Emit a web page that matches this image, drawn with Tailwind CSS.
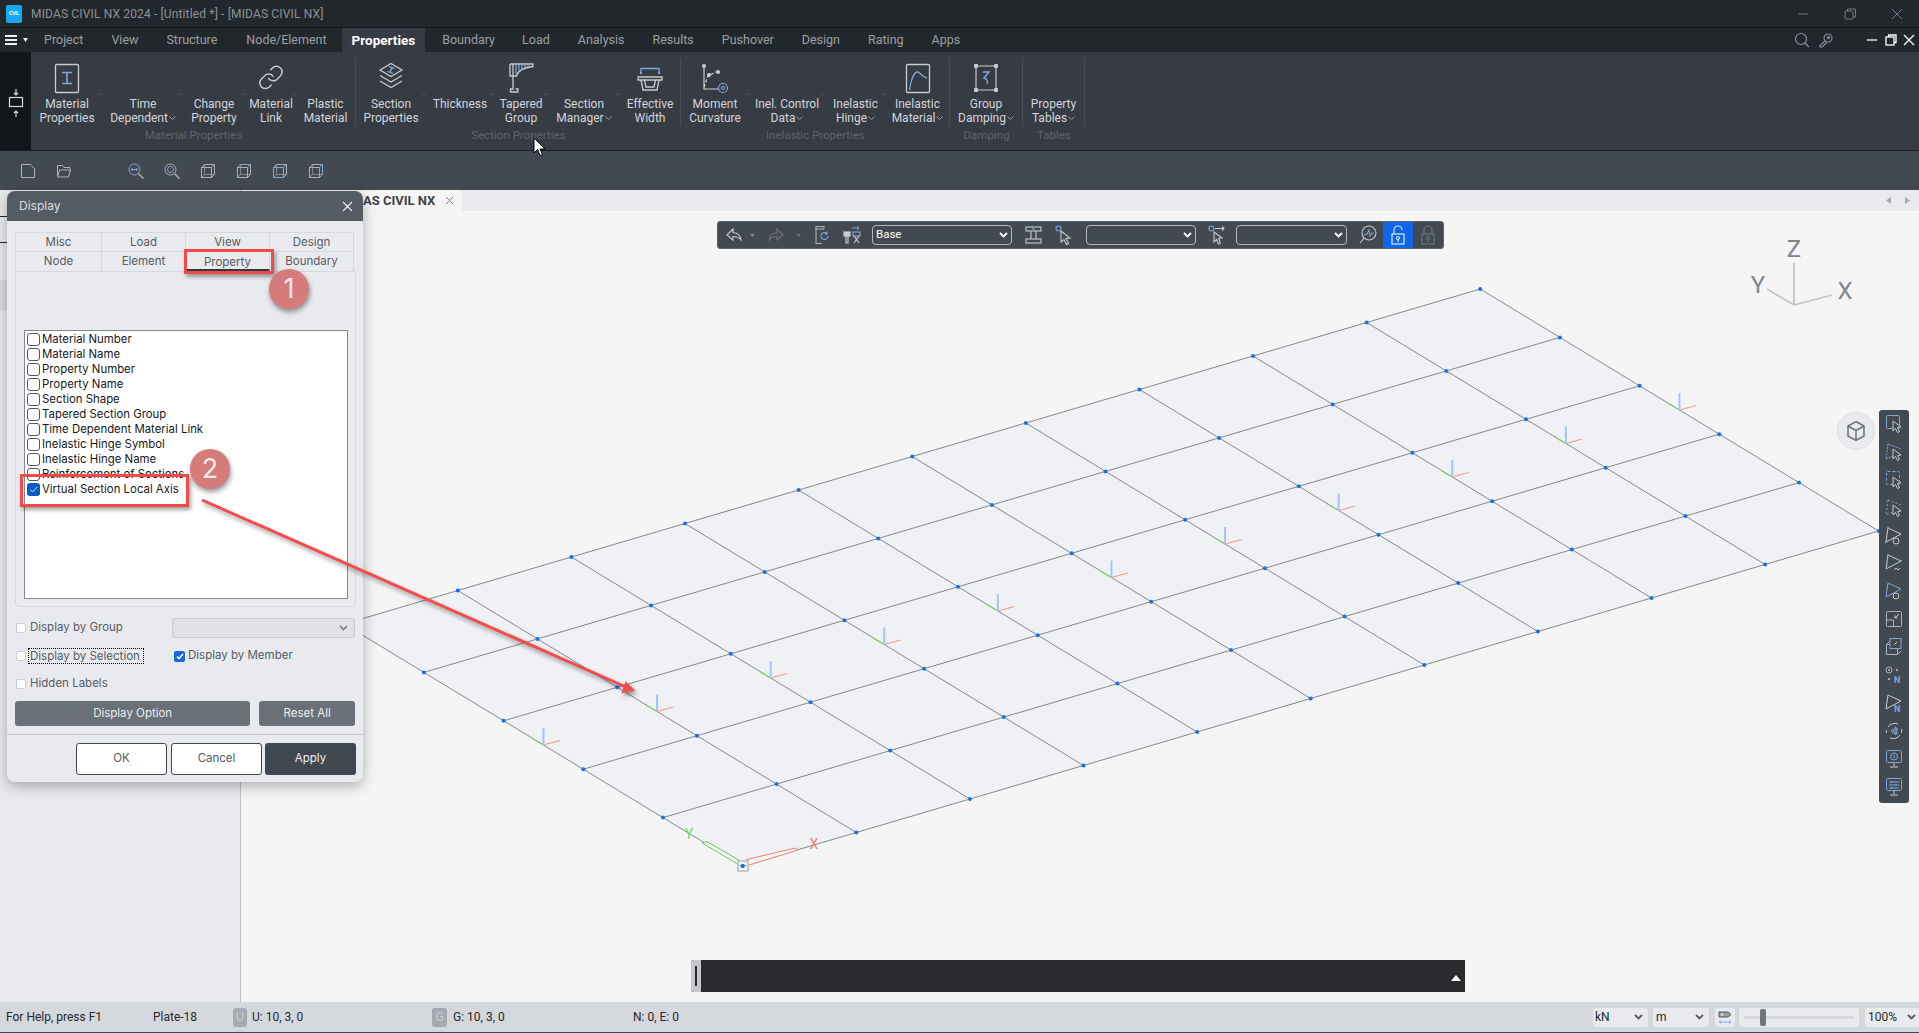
<!DOCTYPE html>
<html lang="en">
<head>
<meta charset="UTF-8">
<title>MIDAS CIVIL NX</title>
<script src="https://cdn.jsdelivr.net/npm/@tailwindcss/browser@4"></script>
</head>
<body class="bg-[#f5f5f5]">
<div class="relative w-[1919px] h-[1033px] overflow-hidden flex flex-col font-['Roboto',sans-serif]">

  <!-- title bar -->
  <div class="h-[28px] shrink-0 flex items-center bg-[#22272b] border-b border-[#11151a]">
    <div class="ml-[6px] w-[16px] h-[18px] rounded-[2px] bg-[#19a9f2] flex items-center justify-center text-[5.5px] font-bold text-white">CVL</div>
    <span class="ml-[9px] text-[12px] text-[#8d9298] tracking-[0.15px]">MIDAS CIVIL NX 2024 - [Untitled *] - [MIDAS CIVIL NX]</span>
    <div class="ml-auto flex items-center gap-[31px] pr-[14px]">
      <svg width="16" height="16" viewBox="0 0 16 16" fill="none" stroke="#777c82"><path d="M3 8h10"/></svg>
      <svg width="16" height="16" viewBox="0 0 16 16" fill="none" stroke="#777c82"><rect x="3" y="5" width="8" height="8" rx="1"/><path d="M5.500 5V3h8v8h-2.500"/></svg>
      <svg width="16" height="16" viewBox="0 0 16 16" fill="none" stroke="#777c82"><path d="M3 3l10 10M13 3L3 13"/></svg>
    </div>
  </div>

  <!-- menu row -->
  <div class="h-[24px] shrink-0 flex items-center bg-[#22272b] text-[12.5px] text-[#9ba0a6]">
    <svg class="ml-[5px]" width="12" height="10" viewBox="0 0 12 10" fill="#eceef0"><rect y="0" width="12" height="2"/><rect y="4" width="12" height="2"/><rect y="8" width="12" height="2"/></svg>
    <svg class="ml-[6px]" width="5" height="4" viewBox="0 0 5 4" fill="#eceef0"><path d="M0 0h5L2.500 4z"/></svg>
    <div class="ml-[2px] flex items-center h-full">
      <span class="px-[14px]">Project</span>
      <span class="px-[14px]">View</span>
      <span class="px-[14px]">Structure</span>
      <span class="px-[15px]">Node/Element</span>
      <span class="h-full flex items-center px-[10px] bg-[#373b44] text-white font-bold text-[13.5px]">Properties</span>
      <span class="pl-[14px] pr-[13px] ml-[3px]">Boundary</span>
      <span class="px-[14px]">Load</span>
      <span class="px-[14px]">Analysis</span>
      <span class="px-[14px]">Results</span>
      <span class="px-[14px]">Pushover</span>
      <span class="px-[14px]">Design</span>
      <span class="px-[14px]">Rating</span>
      <span class="px-[14px]">Apps</span>
    </div>
    <div class="ml-auto flex items-center pr-[4px]">
      <svg width="16" height="16" viewBox="0 0 16 16" fill="none" stroke="#8a8f95" stroke-width="1.200"><circle cx="7" cy="7" r="5.500"/><path d="M11 11l4 4"/></svg>
      <svg class="ml-[7.500px]" width="15" height="15" viewBox="0 0 15 15" fill="none" stroke="#8a8f95" stroke-width="1.200"><circle cx="10" cy="5" r="4"/><circle cx="10.500" cy="4.500" r="1" fill="#8a8f95"/><path d="M7 8l-5 4.500v1.500h2l5-4.500"/></svg>
      <svg class="ml-[33.500px]" width="12" height="12" viewBox="0 0 12 12" fill="none" stroke="#fff" stroke-width="1.300"><path d="M1 6h10"/></svg>
      <svg class="ml-[6.500px]" width="12" height="12" viewBox="0 0 12 12" fill="none" stroke="#fff" stroke-width="1.300"><rect x="1" y="3" width="8" height="8"/><path d="M3.500 3V1h7.500v7.500H9"/></svg>
      <svg class="ml-[6.500px]" width="12" height="12" viewBox="0 0 12 12" fill="none" stroke="#fff" stroke-width="1.300"><path d="M1 1l10 10M11 1L1 11"/></svg>
    </div>
  </div>

  <!-- ribbon -->
  <div class="h-[99px] shrink-0 flex bg-[#373b44] border-b border-[#16191d] text-[12px] leading-[14px] text-[#d2d5da]">
    <div class="w-[31px] bg-[#12171b] flex items-center justify-center pt-[3px]">
      <svg width="16" height="30" viewBox="0 0 16 30" fill="none" stroke="#d8dade" stroke-width="1.200"><path d="M8 1v6M6 5l2 2 2-2"/><rect x="1.500" y="9.500" width="13" height="9"/><path d="M8 29v-6M6 25l2-2 2 2"/></svg>
    </div>
    <div class="flex pt-[6px]">

      <!-- Material Properties group -->
      <div class="flex flex-col w-[325px]">
        <div class="flex h-[68px] border-r border-[#4a4e56]">
          <div class="relative w-[72px] flex flex-col items-center pt-[4px]">
            <svg width="32" height="32" viewBox="0 0 32 32" fill="none"><rect x="4.500" y="2.500" width="23" height="28" rx="1" stroke="#c8cbd0" stroke-width="1.300"/><path d="M11 10.500h10M16 10.500v11M11 21.500h10" stroke="#7fa6dc" stroke-width="1.600"/></svg>
            <div class="mt-[3px] text-center">Material<br>Properties</div>
            <span class="absolute right-0 top-[36px] w-[4px] h-px bg-[#4b505a]"></span>
          </div>
          <div class="relative w-[80px] flex flex-col items-center pt-[36px]">
            <div class="mt-[3px] text-center">Time<br>Dependent<svg class="inline ml-[1px] mb-[1px]" width="7" height="4" viewBox="0 0 7 4" fill="none" stroke="#9b9fa6"><path d="M.5.500l3 3 3-3"/></svg></div>
            <span class="absolute right-0 top-[36px] w-[4px] h-px bg-[#4b505a]"></span>
          </div>
          <div class="relative w-[62px] flex flex-col items-center pt-[36px]">
            <div class="mt-[3px] text-center">Change<br>Property</div>
            <span class="absolute right-0 top-[36px] w-[4px] h-px bg-[#4b505a]"></span>
          </div>
          <div class="relative w-[52px] flex flex-col items-center pt-[4px]">
            <svg width="32" height="32" viewBox="0 0 32 32" fill="none" stroke="#c8cbd0" stroke-width="1.300" stroke-linecap="round"><g transform="translate(2.500 2) scale(1.120)"><path d="M10 13a5 5 0 0 0 7.540.54l3-3a5 5 0 0 0-7.070-7.070l-1.720 1.710"/><path d="M14 11a5 5 0 0 0-7.540-.54l-3 3a5 5 0 0 0 7.070 7.070l1.710-1.710"/></g></svg>
            <div class="mt-[3px] text-center">Material<br>Link</div>
            <span class="absolute right-0 top-[36px] w-[4px] h-px bg-[#4b505a]"></span>
          </div>
          <div class="w-[57px] flex flex-col items-center pt-[36px]">
            <div class="mt-[3px] text-center">Plastic<br>Material</div>
          </div>
        </div>
        <div class="mt-[2px] text-center text-[11.5px] text-[#5f646c]">Material Properties</div>
      </div>

      <!-- Section Properties group -->
      <div class="flex flex-col w-[325px]">
        <div class="flex h-[68px] border-r border-[#4a4e56]">
          <div class="relative w-[70px] flex flex-col items-center pt-[4px]">
            <svg width="32" height="32" viewBox="0 0 32 32" fill="none" stroke="#c8cbd0" stroke-width="1.300"><path d="M16 1.500l11 6.500-11 6.500L5 8z"/><path d="M5 13.500l11 6.500 11-6.500M5 19l11 6.500L27 19"/><path d="M13 5.500l6 0M16 5.500l0 5M13 10.500l6 0" stroke="#7fa6dc" stroke-width="1.400" transform="rotate(20 16 8)"/></svg>
            <div class="mt-[3px] text-center">Section<br>Properties</div>
            <span class="absolute right-0 top-[36px] w-[4px] h-px bg-[#4b505a]"></span>
          </div>
          <div class="relative w-[68px] flex flex-col items-center pt-[36px]">
            <div class="mt-[3px] text-center">Thickness</div>
            <span class="absolute right-0 top-[36px] w-[4px] h-px bg-[#4b505a]"></span>
          </div>
          <div class="relative w-[54px] flex flex-col items-center pt-[4px]">
            <svg width="32" height="32" viewBox="0 0 32 32" fill="none" stroke="#c8cbd0" stroke-width="1.300"><path d="M5 2h23v2.500c-9 1-15 4-16.500 9.500H8v13H5.500v3H13v-3h-2.500"/><path d="M8 2v12M5 2v12h3" /><path d="M11 3v9M14 3v6M17 3v5M20 3v3M23 3v2" stroke="#7fa6dc"/></svg>
            <div class="mt-[3px] text-center">Tapered<br>Group</div>
            <span class="absolute right-0 top-[36px] w-[4px] h-px bg-[#4b505a]"></span>
          </div>
          <div class="relative w-[72px] flex flex-col items-center pt-[36px]">
            <div class="mt-[3px] text-center">Section<br>Manager<svg class="inline ml-[1px] mb-[1px]" width="7" height="4" viewBox="0 0 7 4" fill="none" stroke="#9b9fa6"><path d="M.5.500l3 3 3-3"/></svg></div>
            <span class="absolute right-0 top-[36px] w-[4px] h-px bg-[#4b505a]"></span>
          </div>
          <div class="w-[60px] flex flex-col items-center pt-[4px]">
            <svg width="32" height="32" viewBox="0 0 32 32" fill="none" stroke="#c8cbd0" stroke-width="1.300"><path d="M7 11V6.500h18V11" stroke="#7fa6dc"/><circle cx="7" cy="11" r="1.200" fill="#7fa6dc" stroke="none"/><circle cx="25" cy="11" r="1.200" fill="#7fa6dc" stroke="none"/><path d="M4 15h24v3H4zM7 18l2 10h14l2-10M10.500 18l1.500 7h8l1.500-7"/></svg>
            <div class="mt-[3px] text-center">Effective<br>Width</div>
          </div>
        </div>
        <div class="mt-[2px] text-center text-[11.5px] text-[#5f646c]">Section Properties</div>
      </div>

      <!-- Inelastic Properties group -->
      <div class="flex flex-col w-[269px]">
        <div class="flex h-[68px] border-r border-[#4a4e56]">
          <div class="relative w-[68px] flex flex-col items-center pt-[4px]">
            <svg width="32" height="32" viewBox="0 0 32 32" fill="none" stroke="#c8cbd0" stroke-width="1.200"><path d="M5 4v23h15"/><path d="M5 25l4-11 8-4" stroke-dasharray="3 2" stroke="#d8dade"/><circle cx="5" cy="4" r="1.400" fill="#c8cbd0"/><circle cx="10" cy="13" r="1.400" fill="#c8cbd0"/><circle cx="19" cy="10" r="1.400" fill="#c8cbd0"/><circle cx="24" cy="26" r="4.500" stroke="#7fa6dc"/><circle cx="24" cy="26" r="1.500" stroke="#7fa6dc"/></svg>
            <div class="mt-[3px] text-center">Moment<br>Curvature</div>
            <span class="absolute right-0 top-[36px] w-[4px] h-px bg-[#4b505a]"></span>
          </div>
          <div class="relative w-[76px] flex flex-col items-center pt-[36px]">
            <div class="mt-[3px] text-center">Inel. Control<br>Data<svg class="inline ml-[1px] mb-[1px]" width="7" height="4" viewBox="0 0 7 4" fill="none" stroke="#9b9fa6"><path d="M.5.500l3 3 3-3"/></svg></div>
            <span class="absolute right-0 top-[36px] w-[4px] h-px bg-[#4b505a]"></span>
          </div>
          <div class="relative w-[61px] flex flex-col items-center pt-[36px]">
            <div class="mt-[3px] text-center">Inelastic<br>Hinge<svg class="inline ml-[1px] mb-[1px]" width="7" height="4" viewBox="0 0 7 4" fill="none" stroke="#9b9fa6"><path d="M.5.500l3 3 3-3"/></svg></div>
            <span class="absolute right-0 top-[36px] w-[4px] h-px bg-[#4b505a]"></span>
          </div>
          <div class="w-[63px] flex flex-col items-center pt-[4px]">
            <svg width="32" height="32" viewBox="0 0 32 32" fill="none"><rect x="4.500" y="2.500" width="23" height="28" rx="1" stroke="#c8cbd0" stroke-width="1.300"/><path d="M7.500 28c1-8 4-18 8-18 3 0 4 5 9.500 6" stroke="#7fa6dc" stroke-width="1.300"/></svg>
            <div class="mt-[3px] text-center">Inelastic<br>Material<svg class="inline ml-[1px] mb-[1px]" width="7" height="4" viewBox="0 0 7 4" fill="none" stroke="#9b9fa6"><path d="M.5.500l3 3 3-3"/></svg></div>
          </div>
        </div>
        <div class="mt-[2px] text-center text-[11.5px] text-[#5f646c]">Inelastic Properties</div>
      </div>

      <!-- Damping group -->
      <div class="flex flex-col w-[73px]">
        <div class="flex h-[68px] border-r border-[#4a4e56]">
          <div class="w-[72px] flex flex-col items-center pt-[4px]">
            <svg width="32" height="32" viewBox="0 0 32 32" fill="#c8cbd0" stroke="#c8cbd0" stroke-width="1.200"><path d="M6 4h20M26 4v24M26 28H6M6 28V4" fill="none"/><rect x="4" y="2" width="4" height="4" rx="1" stroke="none"/><rect x="24" y="2" width="4" height="4" rx="1" stroke="none"/><rect x="4" y="26" width="4" height="4" rx="1" stroke="none"/><rect x="24" y="26" width="4" height="4" rx="1" stroke="none"/><path d="M13 10h6l-5 6c3 1 4 3 3 6" fill="none" stroke="#7fa6dc" stroke-width="1.400"/></svg>
            <div class="mt-[3px] text-center">Group<br>Damping<svg class="inline ml-[1px] mb-[1px]" width="7" height="4" viewBox="0 0 7 4" fill="none" stroke="#9b9fa6"><path d="M.5.500l3 3 3-3"/></svg></div>
          </div>
        </div>
        <div class="mt-[2px] text-center text-[11.5px] text-[#5f646c]">Damping</div>
      </div>

      <!-- Tables group -->
      <div class="flex flex-col w-[62px]">
        <div class="flex h-[68px] border-r border-[#4a4e56]">
          <div class="w-[61px] flex flex-col items-center pt-[36px]">
            <div class="mt-[3px] text-center">Property<br>Tables<svg class="inline ml-[1px] mb-[1px]" width="7" height="4" viewBox="0 0 7 4" fill="none" stroke="#9b9fa6"><path d="M.5.500l3 3 3-3"/></svg></div>
          </div>
        </div>
        <div class="mt-[2px] text-center text-[11.5px] text-[#5f646c]">Tables</div>
      </div>
    </div>
  </div>

  <!-- quick toolbar -->
  <div class="h-[39px] shrink-0 flex items-center bg-[#434950] pl-[20px]">
    <svg width="16" height="16" viewBox="0 0 16 16" fill="none" stroke="#aeb2b8"><path d="M1.500 1.500h9l4 4v9h-13z"/></svg>
    <svg class="ml-[20px]" width="16" height="16" viewBox="0 0 16 16" fill="none" stroke="#aeb2b8"><path d="M1.500 14V2.500h5l1.500 2h6v2.500M1.500 14l2-7h11l-2 7z"/></svg>
    <svg class="ml-[56px]" width="16" height="16" viewBox="0 0 16 16" fill="none" stroke="#aeb2b8"><circle cx="6.500" cy="6.500" r="5.500" stroke="#7fa6dc"/><path d="M3.500 6.500h6M4.500 5l-1 1.500 1 1.500M8.500 5l1 1.500-1 1.500" stroke="#7fa6dc"/><path d="M10.500 10.500l5 5" stroke-width="1.500"/></svg>
    <svg class="ml-[20px]" width="16" height="16" viewBox="0 0 16 16" fill="none" stroke="#aeb2b8"><circle cx="6.500" cy="6.500" r="5.500"/><circle cx="6.500" cy="6.500" r="3" stroke="#7fa6dc"/><path d="M10.500 10.500l5 5" stroke-width="1.500"/></svg>
    <svg class="ml-[20px]" width="16" height="16" viewBox="0 0 16 16" fill="none" stroke="#aeb2b8"><rect x="1.500" y="4.500" width="10" height="10"/><path d="M1.500 4.500l3-3h10v10l-3 3M11.500 4.500l3-3"/><path d="M1.500 14.500l3-3h10M4.500 1.500v10" stroke-opacity=".6"/></svg>
    <svg class="ml-[20px]" width="16" height="16" viewBox="0 0 16 16" fill="none" stroke="#aeb2b8"><rect x="1.500" y="4.500" width="10" height="10"/><path d="M1.500 4.500l3-3h10l-3 3" stroke="#7fa6dc"/><path d="M14.500 1.500v10l-3 3" /><path d="M1.500 14.500l3-3h10M4.500 1.500v10" stroke-opacity=".6"/></svg>
    <svg class="ml-[20px]" width="16" height="16" viewBox="0 0 16 16" fill="none" stroke="#aeb2b8"><path d="M1.500 4.500h10v10h-10z" stroke="#7fa6dc"/><path d="M1.500 4.500l3-3h10v10l-3 3M11.500 4.500l3-3"/><path d="M1.500 14.500l3-3h10M4.500 1.500v10" stroke-opacity=".6"/></svg>
    <svg class="ml-[20px]" width="16" height="16" viewBox="0 0 16 16" fill="none" stroke="#aeb2b8"><rect x="1.500" y="4.500" width="10" height="10"/><path d="M1.500 4.500l3-3h10v10l-3 3"/><path d="M11.500 4.500l3-3v10l-3 3z" stroke="#7fa6dc"/><path d="M1.500 14.500l3-3h10M4.500 1.500v10" stroke-opacity=".6"/></svg>
  </div>

  <!-- work area -->
  <div class="flex-1 flex min-h-0">
    <!-- left tree panel, almost hidden behind the dialog -->
    <div class="w-[241px] shrink-0 bg-[#e9eaee] border-r border-[#bfc3c8] flex flex-col">
      <div class="mt-[26px] h-px w-[8px] bg-[#22272b]"></div>
      <div class="mt-[25px] h-px w-[8px] bg-[#22272b]"></div>
      <div class="mt-[37px] h-[30px] w-[8px] bg-[#dcdde0]"></div>
    </div>
    <div class="flex-1 flex flex-col min-w-0">
      <!-- document tab strip -->
      <div class="h-[21px] shrink-0 bg-[#e9eaee] flex items-center">
        <div class="h-full flex items-center w-[221px] pl-[122px] bg-[#f5f5f5]">
          <span class="text-[13px] font-bold text-[#3d4249] whitespace-nowrap">AS CIVIL NX</span>
          <svg class="ml-[10px]" width="9" height="9" viewBox="0 0 9 9" fill="none" stroke="#7b8087"><path d="M1 1l7 7M8 1L1 8"/></svg>
        </div>
        <div class="ml-auto flex items-center gap-[14px] pr-[9px]">
          <svg width="5" height="7" viewBox="0 0 5 7" fill="#a7abb1"><path d="M5 0v7L0 3.500z"/></svg>
          <svg width="5" height="7" viewBox="0 0 5 7" fill="#a7abb1"><path d="M0 0v7l5-3.500z"/></svg>
        </div>
      </div>

      <!-- 3D canvas -->
      <div class="relative flex-1 bg-[#f5f5f5] overflow-hidden">
        <svg id="mesh" class="absolute inset-0 w-full h-full" viewBox="241 211 1678 791"></svg>

        <!-- view toolbar -->
        <div class="absolute left-[476px] top-[10px] w-[727px] h-[28px] flex items-center bg-[#434950] border border-[#5f656c] rounded-[3px] text-[11.500px] text-white">
          <svg class="ml-[7px]" width="18" height="18" viewBox="0 0 18 18" fill="none" stroke="#c8cbd0" stroke-width="1.100"><path d="M8 3L2 9l6 5v-3.500c3 0 6 1 8 3.500-.5-4-3-7-8-7.500z"/></svg>
          <svg class="ml-[7px]" width="5" height="3" viewBox="0 0 5 3" fill="#8a8f95"><path d="M0 0h5L2.500 3z"/></svg>
          <svg class="ml-[12px]" width="18" height="18" viewBox="0 0 18 18" fill="none" stroke="#6d7279" stroke-width="1.100"><path d="M10 3l6 6-6 5v-3.500c-3 0-6 1-8 3.500.5-4 3-7 8-7.500z"/></svg>
          <svg class="ml-[11px]" width="5" height="3" viewBox="0 0 5 3" fill="#6d7279"><path d="M0 0h5L2.500 3z"/></svg>
          <svg class="ml-[12px]" width="18" height="20" viewBox="0 0 18 20" fill="none" stroke="#aeb2b8" stroke-width="1.100"><path d="M11 3.500V1.500H3v17h6"/><path d="M3 4h8"/><path d="M15 11a3.500 3.500 0 1 1-1-2.500M14 6.500v2.500h-2.500" stroke="#7fa6dc"/></svg>
          <svg class="ml-[12px]" width="18" height="20" viewBox="0 0 18 20" fill="none" stroke="#c8cbd0" stroke-width="1.200"><path d="M9 3h7M14 1l2 2-2 2" stroke="#7fa6dc" stroke-width="1"/><rect x="1" y="7" width="6" height="4" fill="#c8cbd0"/><rect x="10" y="7" width="7" height="4" stroke="#7fa6dc"/><path d="M3 11v7h2v-7M11 11l2.500 3.500L16 11M11 18l2.500-3.500L16 18" /></svg>
          <div class="ml-[11px] w-[140px] h-[20px] shrink-0 rounded-[4px] border border-[#b5b8bd] flex items-center justify-between pl-[3px] pr-[3px]">
            <span>Base</span>
            <svg width="9" height="6" viewBox="0 0 9 6" fill="none" stroke="#fff" stroke-width="1.800"><path d="M1 1l3.500 3.500L8 1"/></svg>
          </div>
          <svg class="ml-[13px]" width="17" height="20" viewBox="0 0 17 20" fill="none" stroke="#c8cbd0" stroke-width="1.100"><rect x="1" y="2" width="15" height="4"/><rect x="1" y="14" width="15" height="4"/><path d="M6 6v8M11 6v8"/><path d="M7 2.500l3 3" stroke="#7fa6dc"/></svg>
          <svg class="ml-[13px]" width="18" height="22" viewBox="0 0 18 22" fill="none" stroke="#c8cbd0" stroke-width="1.100"><circle cx="3.500" cy="4.500" r="2.500" stroke="#7fa6dc"/><path d="M6 7l9 7-4 .5 2.500 5-2 1-2.500-5L6 18z"/></svg>
          <div class="ml-[13px] w-[110px] h-[20px] shrink-0 rounded-[4px] border border-[#b5b8bd] flex items-center justify-end pr-[3px]">
            <svg width="9" height="6" viewBox="0 0 9 6" fill="none" stroke="#fff" stroke-width="1.800"><path d="M1 1l3.500 3.500L8 1"/></svg>
          </div>
          <svg class="ml-[12px]" width="18" height="22" viewBox="0 0 18 22" fill="none" stroke="#c8cbd0" stroke-width="1.100"><circle cx="3.500" cy="4.500" r="2.500" stroke="#7fa6dc"/><path d="M7 4.500h9M14 2.500l2 2-2 2" /><path d="M6 8l8 6-3.500.5 2 4.500-2 1-2-4.500L6 18z"/></svg>
          <div class="ml-[10px] w-[111px] h-[20px] shrink-0 rounded-[4px] border border-[#b5b8bd] flex items-center justify-end pr-[3px]">
            <svg width="9" height="6" viewBox="0 0 9 6" fill="none" stroke="#fff" stroke-width="1.800"><path d="M1 1l3.500 3.500L8 1"/></svg>
          </div>
          <svg class="ml-[12px]" width="18" height="20" viewBox="0 0 18 20" fill="none" stroke="#c8cbd0" stroke-width="1.100"><circle cx="10" cy="8" r="7"/><path d="M5 10l3-1 2-4 1 6 2-3h2" stroke="#7fa6dc"/><path d="M5 13l-4 5"/></svg>
          <div class="ml-[6px] w-[30px] h-full shrink-0 bg-[#0f66e8] flex items-center justify-center">
            <svg width="14" height="20" viewBox="0 0 14 20" fill="none" stroke="#d9e6fb" stroke-width="1.200"><path d="M3 9V5a4 4 0 0 1 8 0"/><rect x="1" y="9" width="12" height="10"/><circle cx="7" cy="13" r="1.500"/><path d="M7 14.500V17"/></svg>
          </div>
          <svg class="ml-[8px]" width="14" height="20" viewBox="0 0 14 20" fill="none" stroke="#6d7279" stroke-width="1.200"><path d="M3 9V5a4 4 0 0 1 8 0v4"/><rect x="1" y="9" width="12" height="10"/><circle cx="7" cy="13" r="1.500"/><path d="M7 14.500V17"/></svg>
        </div>

        <!-- axis gizmo -->
        <svg class="absolute left-[1500px] top-[20px]" width="120" height="90" viewBox="0 0 120 90">
          <path d="M53 74V32M53 74L26 58M53 74L91 64" stroke="#c0c5ca" stroke-width="1.800" fill="none"/>
          <text x="53" y="26" text-anchor="middle" font-family="Roboto" font-size="24" fill="#80868c">Z</text>
          <text x="17" y="62" text-anchor="middle" font-family="Roboto" font-size="24" fill="#80868c">Y</text>
          <text x="104" y="68" text-anchor="middle" font-family="Roboto" font-size="24" fill="#80868c">X</text>
        </svg>

        <!-- view cube button -->
        <div class="absolute left-[1596px] top-[201px] w-[38px] h-[38px] rounded-full bg-[#e9eaee] border border-[#dddfe3] flex items-center justify-center">
          <svg width="20" height="22" viewBox="0 0 20 22" fill="none" stroke="#6b7077" stroke-width="1.500"><path d="M10 1.500l8 4.500v10l-8 4.500L2 16V6zM2 6l8 4.500L18 6M10 10.500v10"/></svg>
        </div>

        <!-- right toolbar -->
        <div class="absolute left-[1638px] top-[199px] w-[30px] h-[393px] pt-[4px] bg-[#434950] rounded-[3px] flex flex-col items-center gap-[7.900px]">
          <svg width="18" height="20" viewBox="0 0 18 20" fill="none" stroke="#7fa6dc"><rect x="1.500" y="1.500" width="13" height="13" rx="1"/><path d="M8 7l8 6-3.500.5 2 4-2 1-2-4L8 17z" stroke="#c8cbd0" fill="#434950"/></svg>
          <svg width="18" height="20" viewBox="0 0 18 20" fill="none" stroke="#7fa6dc"><path d="M3 2l13 5M3 2L1 17l7-3" stroke-dasharray="2 1"/><path d="M8 7l8 6-3.500.5 2 4-2 1-2-4L8 17z" stroke="#c8cbd0" fill="#434950"/></svg>
          <svg width="18" height="20" viewBox="0 0 18 20" fill="none" stroke="#7fa6dc" stroke-dasharray="3 2"><rect x="1.500" y="1.500" width="13" height="13" rx="1"/><path d="M8 7l8 6-3.500.5 2 4-2 1-2-4L8 17z" stroke="#c8cbd0" fill="#434950" stroke-dasharray="none"/></svg>
          <svg width="18" height="20" viewBox="0 0 18 20" fill="none" stroke="#7fa6dc" stroke-dasharray="2 2"><path d="M3 2l13 5M3 2L1 17l7-3"/><path d="M8 7l8 6-3.500.5 2 4-2 1-2-4L8 17z" stroke="#c8cbd0" fill="#434950" stroke-dasharray="none"/></svg>
          <svg width="18" height="20" viewBox="0 0 18 20" fill="none" stroke="#c8cbd0"><path d="M3 2l13 6-15 8z"/><circle cx="3" cy="2" r="1" fill="#7fa6dc" stroke="none"/><circle cx="1" cy="16" r="1" fill="#7fa6dc" stroke="none"/><circle cx="11" cy="15" r="3" fill="#434950"/></svg>
          <svg width="18" height="20" viewBox="0 0 18 20" fill="none" stroke="#c8cbd0"><path d="M3 2l13 6-15 8z"/><circle cx="3" cy="2" r="1" fill="#7fa6dc" stroke="none"/><circle cx="16" cy="8" r="1" fill="#7fa6dc" stroke="none"/><path d="M9 17l2-2 2 2 2-2" /></svg>
          <svg width="18" height="20" viewBox="0 0 18 20" fill="none" stroke="#c8cbd0"><path d="M3 2l13 6-15 8z" stroke="#7fa6dc"/><circle cx="11" cy="15" r="3" fill="#434950"/></svg>
          <svg width="18" height="20" viewBox="0 0 18 20" fill="none" stroke="#aeb2b8"><rect x="1.500" y="2.500" width="15" height="15" rx="1"/><path d="M1.500 11h7v6.500"/><path d="M14 5l-4 4M10 6.500V9h2.500" stroke="#c8cbd0"/></svg>
          <svg width="18" height="20" viewBox="0 0 18 20" fill="none" stroke="#aeb2b8"><path d="M1.500 7.500h11v10h-11zM1.500 7.500l3-3M12.500 17.500l4-4"/><rect x="5" y="1.500" width="11" height="10" stroke="#7fa6dc" fill="#434950"/><path d="M9 8l3-3" stroke="#c8cbd0"/></svg>
          <svg width="18" height="20" viewBox="0 0 18 20" fill="none"><circle cx="4" cy="5" r="3" stroke="#aeb2b8"/><circle cx="4" cy="5" r="1" fill="#aeb2b8"/><circle cx="12" cy="5" r="1" fill="#c8cbd0"/><circle cx="4" cy="14" r="1" fill="#c8cbd0"/><text x="9" y="18" font-family="Roboto" font-size="9" font-weight="700" fill="#7fa6dc">N</text></svg>
          <svg width="18" height="20" viewBox="0 0 18 20" fill="none"><path d="M3 2l13 6-15 8z" stroke="#c8cbd0"/><text x="9" y="19" font-family="Roboto" font-size="9" font-weight="700" fill="#7fa6dc">N</text></svg>
          <svg width="18" height="20" viewBox="0 0 18 20" fill="none" stroke="#c8cbd0"><path d="M3 6a8 8 0 0 1 10-3M15 14a8 8 0 0 1-10 3M1.500 12a8 8 0 0 1 0-3M16.500 8a8 8 0 0 1 0 4"/><path d="M11 6L6 10l5 4zM8 10l4-3v6z" stroke="#7fa6dc"/></svg>
          <svg width="18" height="20" viewBox="0 0 18 20" fill="none" stroke="#7fa6dc"><rect x="1.500" y="1.500" width="15" height="12" rx="1"/><circle cx="9" cy="7.500" r="3.500"/><path d="M9 6v3" /><path d="M9 14v3M5 18h8" stroke="#c8cbd0"/></svg>
          <svg width="18" height="20" viewBox="0 0 18 20" fill="none" stroke="#7fa6dc"><rect x="1.500" y="1.500" width="15" height="12" rx="1"/><path d="M4 5h10M4 8h10M4 11h10M7 4v2M11 7v2M7 10v2"/><path d="M9 14v3M5 18h8" stroke="#c8cbd0"/></svg>
        </div>

        <!-- command bar -->
        <div class="absolute left-[450px] top-[749px] w-[774px] h-[32px] flex items-center bg-[#2a2b2f] rounded-l-[3px]">
          <div class="w-[10px] h-full bg-[#c5c7ca] rounded-l-[3px] flex items-center justify-center"><div class="w-[1.500px] h-[20px] bg-[#2a2b2f]"></div></div>
          <svg class="ml-auto mr-[4px] mt-[4px]" width="10" height="6" viewBox="0 0 10 6" fill="#fff"><path d="M5 0l5 6H0z"/></svg>
        </div>
      </div>
    </div>
  </div>

  <!-- status bar -->
  <div class="relative h-[31px] shrink-0 flex items-center bg-[#d4d7db] border-b border-[#2d4a6f] text-[12px] text-[#26282c] pr-0">
    <span class="ml-[6px] w-[147px]">For Help, press F1</span>
    <span class="w-[80px]">Plate-18</span>
    <span class="w-[14px] h-[19px] rounded-[3px] bg-[#a6aab0] text-[#c9ccd0] flex items-center justify-center">U</span>
    <span class="ml-[5px] w-[180px]">U: 10, 3, 0</span>
    <span class="w-[15px] h-[19px] rounded-[3px] bg-[#a6aab0] text-[#c9ccd0] flex items-center justify-center">G</span>
    <span class="ml-[6px] w-[180px]">G: 10, 3, 0</span>
    <span>N: 0, E: 0</span>
    <div class="ml-auto flex items-center h-[19px]">
      <div class="w-[55px] h-full rounded-[3px] bg-[#e9eaee] flex items-center justify-between pl-[2px] pr-[5px]"><span>kN</span><svg width="9" height="6" viewBox="0 0 9 6" fill="none" stroke="#55595f" stroke-width="1.800"><path d="M1 1l3.500 3.500L8 1"/></svg></div>
      <div class="ml-[5px] w-[56px] h-full rounded-[3px] bg-[#e9eaee] flex items-center justify-between pl-[3px] pr-[5px]"><span>m</span><svg width="9" height="6" viewBox="0 0 9 6" fill="none" stroke="#55595f" stroke-width="1.800"><path d="M1 1l3.500 3.500L8 1"/></svg></div>
      <div class="ml-[6px] w-[20px] h-full rounded-[3px] bg-[#e9eaee] flex items-center justify-center">
        <svg width="14" height="15" viewBox="0 0 14 15" fill="none"><path d="M1 2h9l3 2.500L10 7H1z" fill="#9a9ea4" stroke="#55595f"/><rect x="3" y="3.500" width="2" height="2" fill="#e9eaee"/><path d="M1 12h12M1 12l2-1.500M1 12l2 1.500M13 12l-2-1.500M13 12l-2 1.500" stroke="#86aee8"/></svg>
      </div>
      <div class="ml-[4px] w-[120px] h-full rounded-[3px] bg-[#e9eaee] flex items-center px-[5px] relative">
        <div class="w-full h-[3px] bg-[#d6d8dc]"></div>
        <div class="absolute left-[21px] top-[1px] w-[6px] h-[17px] rounded-[2px] bg-[#70757c]"></div>
      </div>
      <div class="ml-[6px] w-[54px] h-full rounded-l-[3px] bg-[#e9eaee] flex items-center justify-between pl-[3px] pr-[3px]"><span>100%</span><svg width="9" height="6" viewBox="0 0 9 6" fill="none" stroke="#55595f" stroke-width="1.800"><path d="M1 1l3.500 3.500L8 1"/></svg></div>
    </div>
  </div>

  <!-- Display dialog -->
  <div class="absolute left-[7px] top-[191px] w-[356px] rounded-[8px] bg-[#e9eaee] shadow-[0_4px_14px_rgba(0,0,0,0.3)] text-[11.500px] text-[#565b63] font-['Inter',sans-serif] overflow-hidden">
    <div class="h-[30px] bg-[#555b63] flex items-center justify-between pl-[12px] pr-[10px] text-[12px] text-[#dcdee1]">
      <span>Display</span>
      <svg width="11" height="11" viewBox="0 0 11 11" fill="none" stroke="#f1f2f3" stroke-width="1.100"><path d="M1 1l9 9M10 1L1 10"/></svg>
    </div>
    <div class="px-[8px] pt-[11px]">
      <div class="grid grid-cols-[87px_84px_84px_84px] grid-rows-[19px_20px] text-center leading-[19px]">
        <div class="border border-b-0 border-[#d4d7dc]">Misc</div>
        <div class="border-t border-r border-[#d4d7dc]">Load</div>
        <div class="border-t border-r border-[#d4d7dc]">View</div>
        <div class="border-t border-r border-[#d4d7dc]">Design</div>
        <div class="border border-b-0 border-[#d4d7dc]">Node</div>
        <div class="border-t border-r border-[#d4d7dc]">Element</div>
        <div class="border-t border-r border-[#d4d7dc] border-b-2 border-b-[#33373d] leading-[20px]">Property</div>
        <div class="border-t border-r border-[#d4d7dc]">Boundary</div>
      </div>
      <div class="h-[336px] w-[341px] border border-[#d4d7dc] rounded-b-[4px] pl-[8px] pr-[7px] pt-[58px]">
        <div class="h-[269px] border border-[#84878e] bg-white pl-[2px] pt-[1px] text-[11.400px] leading-[15px] text-[#16181b]">
          <div class="h-[15px] flex items-center gap-[2px]"><span class="w-[13px] h-[13px] rounded-[3px] border border-[#55585e] bg-white"></span>Material Number</div>
          <div class="h-[15px] flex items-center gap-[2px]"><span class="w-[13px] h-[13px] rounded-[3px] border border-[#55585e] bg-white"></span>Material Name</div>
          <div class="h-[15px] flex items-center gap-[2px]"><span class="w-[13px] h-[13px] rounded-[3px] border border-[#55585e] bg-white"></span>Property Number</div>
          <div class="h-[15px] flex items-center gap-[2px]"><span class="w-[13px] h-[13px] rounded-[3px] border border-[#55585e] bg-white"></span>Property Name</div>
          <div class="h-[15px] flex items-center gap-[2px]"><span class="w-[13px] h-[13px] rounded-[3px] border border-[#55585e] bg-white"></span>Section Shape</div>
          <div class="h-[15px] flex items-center gap-[2px]"><span class="w-[13px] h-[13px] rounded-[3px] border border-[#55585e] bg-white"></span>Tapered Section Group</div>
          <div class="h-[15px] flex items-center gap-[2px]"><span class="w-[13px] h-[13px] rounded-[3px] border border-[#55585e] bg-white"></span>Time Dependent Material Link</div>
          <div class="h-[15px] flex items-center gap-[2px]"><span class="w-[13px] h-[13px] rounded-[3px] border border-[#55585e] bg-white"></span>Inelastic Hinge Symbol</div>
          <div class="h-[15px] flex items-center gap-[2px]"><span class="w-[13px] h-[13px] rounded-[3px] border border-[#55585e] bg-white"></span>Inelastic Hinge Name</div>
          <div class="h-[15px] flex items-center gap-[2px]"><span class="w-[13px] h-[13px] rounded-[3px] border border-[#55585e] bg-white"></span>Reinforcement of Sections</div>
          <div class="h-[15px] flex items-center gap-[2px]"><span class="w-[13px] h-[13px] rounded-[3px] bg-[#0a5cc4] flex items-center justify-center"><svg width="9" height="7" viewBox="0 0 9 7" fill="none" stroke="#cfe0f7"><path d="M1 3.500l2.500 2.500L8 1"/></svg></span>Virtual Section Local Axis</div>
        </div>
      </div>

      <!-- options -->
      <div class="mt-[11px] h-[20px] flex items-center">
        <span class="ml-[1px] w-[10px] h-[10px] rounded-[2px] bg-white border border-[#c9ccd0]"></span>
        <span class="ml-[4px] w-[142px]">Display by Group</span>
        <div class="w-[184px] h-full rounded-[3px] bg-[#dfe1e5] border border-[#c9ccd0] flex items-center justify-end pr-[6px]">
          <svg width="9" height="6" viewBox="0 0 9 6" fill="none" stroke="#7b8087" stroke-width="1.600"><path d="M1 1l3.500 3.500L8 1"/></svg>
        </div>
      </div>
      <div class="mt-[8px] h-[20px] flex items-center">
        <span class="ml-[1px] w-[10px] h-[10px] rounded-[2px] bg-white border border-[#c9ccd0]"></span>
        <span class="ml-[2px] w-[116px] h-[16px] border border-dotted border-black pl-[1px] leading-[14px]">Display by Selection</span>
        <span class="ml-[30px] w-[11px] h-[11px] rounded-[2px] bg-[#1a66e0] flex items-center justify-center"><svg width="8" height="7" viewBox="0 0 8 7" fill="none" stroke="#fff" stroke-width="1.600"><path d="M1 3.500l2 2L7 1"/></svg></span>
        <span class="ml-[3px]">Display by Member</span>
      </div>
      <div class="mt-[8px] h-[20px] flex items-center">
        <span class="ml-[1px] w-[10px] h-[10px] rounded-[2px] bg-white border border-[#c9ccd0]"></span>
        <span class="ml-[4px]">Hidden Labels</span>
      </div>
      <div class="mt-[7px] flex gap-[9px] text-[#eceef0]">
        <div class="w-[236px] h-[25px] rounded-[3px] bg-[#6a7078] flex items-center justify-center">Display Option</div>
        <div class="w-[96px] h-[25px] rounded-[3px] bg-[#6a7078] flex items-center justify-center">Reset All</div>
      </div>
    </div>
    <div class="mt-[8px] h-px bg-[#c5cad0]"></div>
    <div class="mt-[8px] mb-[7px] h-[32px] flex justify-end gap-[4px] pr-[7px]">
      <div class="w-[91px] rounded-[3px] bg-white border border-[#41474f] flex items-center justify-center">OK</div>
      <div class="w-[91px] rounded-[3px] bg-white border border-[#41474f] flex items-center justify-center">Cancel</div>
      <div class="w-[91px] -ml-px rounded-[3px] bg-[#41474f] text-[#eceef0] flex items-center justify-center">Apply</div>
    </div>
  </div>

  <!-- callouts drawn over the screenshot -->
  <div class="absolute left-[184px] top-[249px] w-[90px] h-[25px] border-[3px] border-[#f04a4a] shadow-[2px_3px_4px_rgba(0,0,0,0.35)]"></div>
  <div class="absolute left-[269px] top-[269px] w-[40px] h-[40px] rounded-full bg-[#d67b7c] shadow-[1px_3px_5px_rgba(0,0,0,0.4)] flex items-center justify-center text-[27px] text-[#f7e9e9] font-['Inter',sans-serif]">1</div>
  <div class="absolute left-[20px] top-[474px] w-[169px] h-[33px] border-[3px] border-[#f04a4a] shadow-[2px_3px_4px_rgba(0,0,0,0.35)]"></div>
  <div class="absolute left-[190px] top-[449px] w-[40px] h-[40px] rounded-full bg-[#d67b7c] shadow-[1px_3px_5px_rgba(0,0,0,0.4)] flex items-center justify-center text-[27px] text-[#f7e9e9] font-['Inter',sans-serif]">2</div>
  <svg class="absolute left-0 top-0 pointer-events-none drop-shadow-[2px_3px_2px_rgba(0,0,0,0.4)]" width="1919" height="1033" viewBox="0 0 1919 1033">
    <path d="M202 500L626 687" stroke="#f34c4c" stroke-width="3" fill="none"/>
    <path d="M633 690L623 692L626 683z" fill="#f34c4c" stroke="#f34c4c" stroke-width="2"/>
  </svg>

  <!-- mouse pointer -->
  <svg class="absolute left-[533px] top-[137px]" width="14" height="20" viewBox="0 0 14 20"><path d="M1 1v15l3.500-3.500L7 18.500l2.500-1L7 12h5z" fill="#fff" stroke="#000"/></svg>
</div>

<script>
// plate mesh: 10 x 5 elements, drawn in page coordinates
const mesh = document.getElementById('mesh');
const O = [742.7, 866], DX = [113.6, -33.5], DY = [-79.7, -48.4];
const pt = (i, j) => [O[0] + i * DX[0] + j * DY[0], O[1] + i * DX[1] + j * DY[1]];
let out = '';
const line = (a, b, c, w) => `<line x1="${a[0]}" y1="${a[1]}" x2="${b[0]}" y2="${b[1]}" stroke="${c}" stroke-width="${w}"/>`;

out += `<polygon points="${[pt(0,0), pt(10,0), pt(10,5), pt(0,5)].join(' ')}" fill="#eff1f4"/>`;
for (let i = 0; i <= 10; i++) out += line(pt(i, 0), pt(i, 5), '#85888d', 1);
for (let j = 0; j <= 5; j++) out += line(pt(0, j), pt(10, j), '#85888d', 1);

// element local axes along the middle row
for (let i = 0; i <= 10; i++) {
  const p = pt(i, 2.5);
  out += line(p, [p[0] + 16.5, p[1] - 4.5], '#f29a8c', 1.2);
  out += line(p, [p[0] - 11, p[1] - 6.5], '#86d06a', 1.4);
  out += line(p, [p[0], p[1] - 17], '#a3c4f5', 2);
}
for (let i = 0; i <= 10; i++) for (let j = 0; j <= 5; j++) {
  const p = pt(i, j);
  out += `<circle cx="${p[0]}" cy="${p[1]}" r="2" fill="#1f6fe0"/>`;
}

// global axes at the origin
out += `<path d="M742 862L707 841.500L702 843L741 866" fill="#f5f5f5" stroke="#6cc75a" stroke-width="1"/>`;
out += `<path d="M745 860L795 848L798 850L746 866" fill="#f5f5f5" stroke="#f08070" stroke-width="1"/>`;
out += `<rect x="738" y="861" width="10" height="10" fill="none" stroke="#c8c9cb" stroke-width="2"/>`;
out += `<circle cx="${O[0]}" cy="${O[1]}" r="2" fill="#1f6fe0"/>`;
out += `<text x="689" y="839" text-anchor="middle" font-family="Roboto" font-size="14" fill="#79d06a">Y</text>`;
out += `<text x="814" y="849" text-anchor="middle" font-family="Roboto" font-size="14" fill="#f08070">X</text>`;
mesh.innerHTML = out;
</script>
</body>
</html>
